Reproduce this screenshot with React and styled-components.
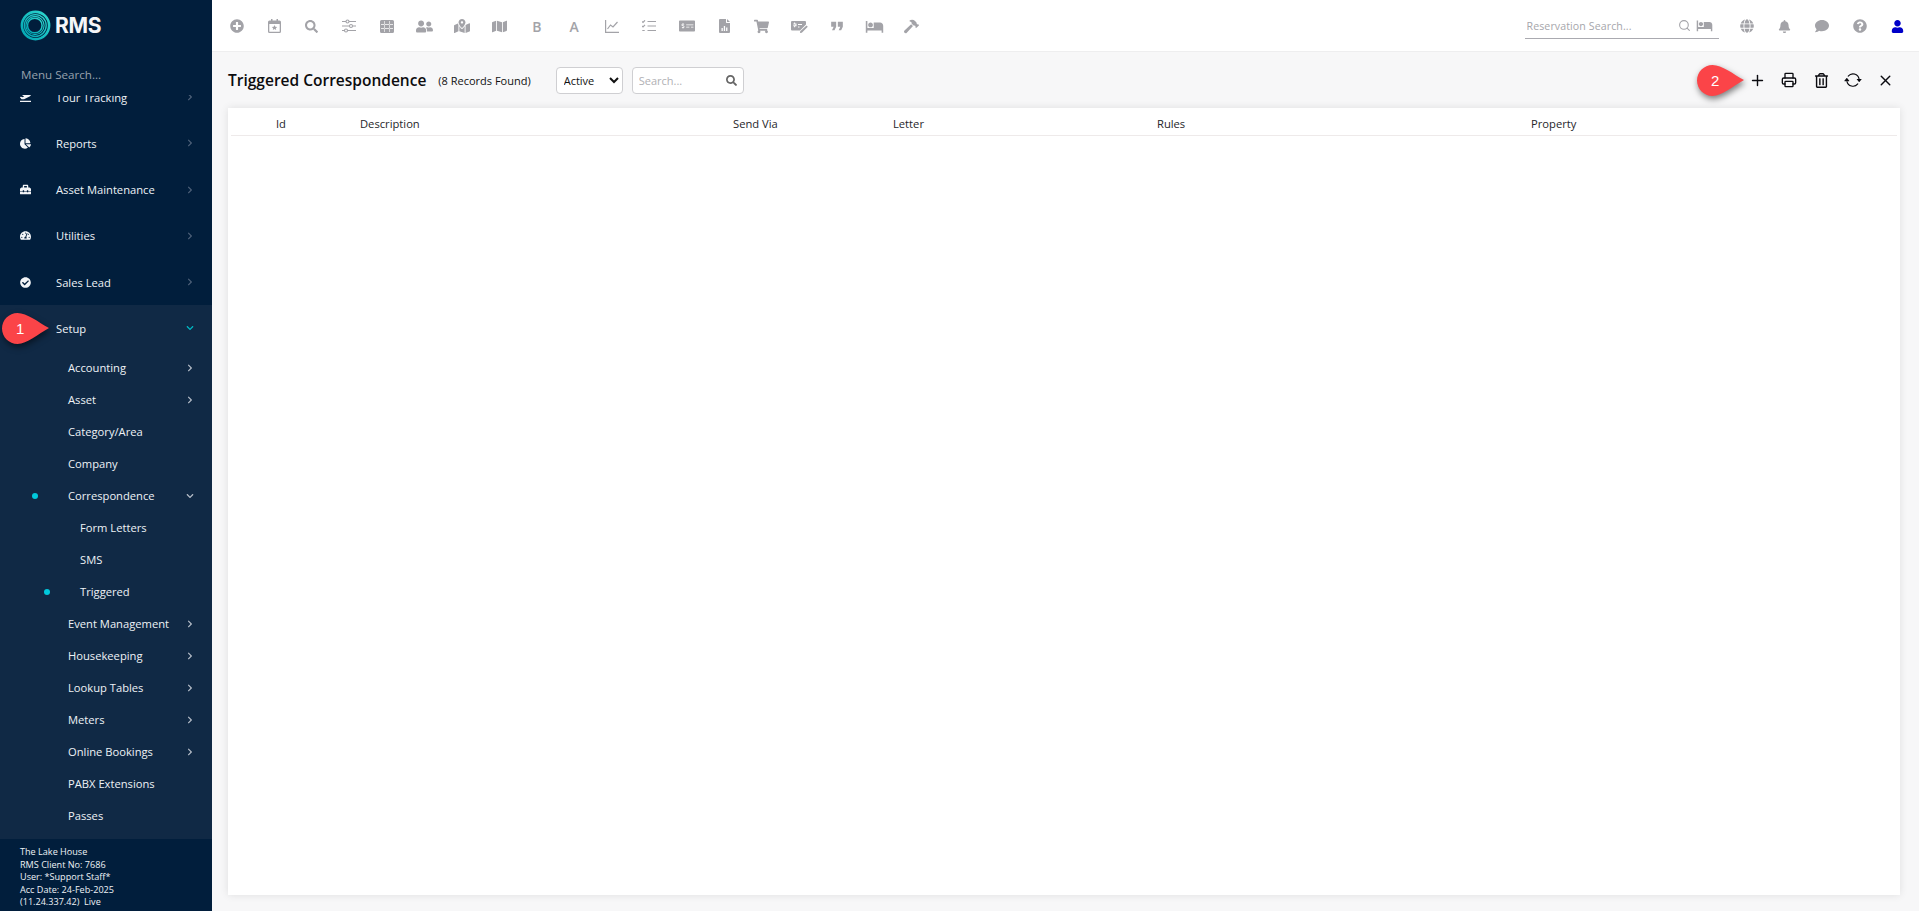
import React from 'react';
import styled, { createGlobalStyle } from 'styled-components';
import {
  FaPlusCircle, FaSearch, FaUserFriends, FaMapMarkedAlt, FaMap, FaMoneyCheckAlt, FaShoppingCart,
  FaHammer, FaGlobe, FaBell, FaComment, FaQuestionCircle, FaUser, FaChartPie, FaToolbox,
  FaTachometerAlt, FaCheckCircle, FaPlaneDeparture, FaChevronRight, FaChevronDown, FaRegTrashAlt,
} from 'react-icons/fa';
import { BsArrowRepeat } from 'react-icons/bs';
import { MdHotel, MdFormatQuote } from 'react-icons/md';
import { Plus, Printer, X, Search } from 'lucide-react';

const GlobalStyle = createGlobalStyle`
  html, body { margin: 0; height: 100%; }
  body { font-family: "Open Sans", "Liberation Sans", sans-serif; font-size: 11.2px; color: #111; }
  #root { height: 100%; }
  * { box-sizing: border-box; }
`;

const Page = styled.div`
  display: flex;
  height: 911px;
  overflow: hidden;
  background: #f7f7f8;
`;

const Sidebar = styled.aside`
  width: 212px;
  flex: none;
  display: flex;
  flex-direction: column;
  background: #011e3c;
`;

const Brand = styled.div`
  height: 58px;
  flex: none;
  display: flex;
  align-items: flex-start;
  gap: 4px;
  padding: 10px 0 0 20px;
`;

const BrandName = styled.span`
  font-family: Inter, "Liberation Sans", sans-serif;
  font-size: 21px;
  font-weight: 700;
  line-height: 32px;
  letter-spacing: -0.3px;
  color: #f4f6f8;
`;

const MenuSearch = styled.input`
  height: 32px;
  flex: none;
  margin-bottom: 5px;
  padding: 0 0 0 21px;
  border: 0;
  outline: 0;
  background: transparent;
  font: 11.6px "Open Sans", sans-serif;
  &::placeholder { color: #97a1ad; opacity: 1; }
`;

const Nav = styled.nav`
  flex: 1;
  min-height: 0;
  overflow: hidden;
`;

const NavScroll = styled.div`
  margin-top: -21px;
`;

const NavRow = styled.div`
  position: relative;
  height: 46.25px;
  display: flex;
  align-items: center;
  padding: 0 16px 0 20px;
  color: #eef2f6;
`;

const NavIcon = styled.span`
  width: 36px;
  flex: none;
  display: flex;
  font-size: 11px;
  color: #f2f4f7;
`;

const NavLabel = styled.span`
  flex: 1;
  white-space: nowrap;
`;

const NavChevron = styled.span`
  display: flex;
  width: 10px;
  font-size: 8px;
  color: ${(p) => p.$color || '#4d6078'};
`;

const SetupSection = styled.div`
  background: #102945;
  padding-bottom: 20px;
`;

const SubRow = styled.div`
  position: relative;
  height: 32px;
  display: flex;
  align-items: center;
  padding: 0 16px 0 ${(p) => (p.$depth === 2 ? 80 : 68)}px;
  color: #eef2f6;
`;

const ActiveDot = styled.i`
  position: absolute;
  top: 13px;
  left: ${(p) => (p.$depth === 2 ? 44 : 32)}px;
  width: 6px;
  height: 6px;
  border-radius: 50%;
  background: #00c9dc;
`;

const SideFooter = styled.footer`
  height: 72px;
  flex: none;
  position: relative;
  padding: 7px 0 0 20px;
  background: #011e3c;
  color: #eef2f6;
  font-size: 9.1px;
  line-height: 12.5px;
  white-space: pre;
`;

const Main = styled.main`
  flex: 1;
  min-width: 0;
  display: flex;
  flex-direction: column;
`;

const TopBar = styled.header`
  height: 52px;
  flex: none;
  display: flex;
  align-items: center;
  padding: 1px 3px 0 6px;
  background: #fff;
  border-bottom: 1px solid #eeeeef;
`;

const TopIcon = styled.span`
  width: 37.5px;
  flex: none;
  display: flex;
  align-items: center;
  justify-content: center;
  color: ${(p) => p.$color || '#a3a3a8'};
`;

const TopLetter = styled(TopIcon)`
  font-size: 14px;
  font-weight: 600;
`;

const ReservationSearch = styled.div`
  width: 194px;
  height: 25px;
  margin: 0 10px 0 auto;
  display: flex;
  align-items: center;
  gap: 5px;
  padding: 0 6px 0 2px;
  border-bottom: 1px solid #aaaab0;
  color: #a3a3a8;
`;

const ReservationInput = styled.input`
  flex: 1;
  min-width: 0;
  border: 0;
  outline: 0;
  padding: 0;
  background: transparent;
  font: 10.6px "Open Sans", sans-serif;
  letter-spacing: 0.1px;
  &::placeholder { color: #a6a6ab; opacity: 1; }
`;

const Content = styled.section`
  flex: 1;
  min-height: 0;
  display: flex;
  flex-direction: column;
  padding: 0 19px 16px 16px;
`;

const ContentHead = styled.div`
  height: 56px;
  flex: none;
  display: flex;
  align-items: center;
`;

const Title = styled.h1`
  margin: 0;
  font-size: 15.5px;
  font-weight: 600;
  color: #0c0c0e;
`;

const Records = styled.span`
  margin: 0 0 0 12px;
  font-size: 11px;
  color: #111;
`;

const StatusSelect = styled.select`
  width: 67px;
  height: 27px;
  margin: 1px 0 0 25px;
  padding: 0 0 0 3px;
  border: 1px solid #cfcfd2;
  border-radius: 4px;
  background: #fff;
  font: 11px "Open Sans", sans-serif;
  color: #111;
`;

const SearchBox = styled.div`
  width: 112px;
  height: 27px;
  margin: 1px 0 0 9px;
  display: flex;
  align-items: center;
  padding: 0 6px;
  border: 1px solid #cfcfd2;
  border-radius: 4px;
  background: #fff;
  color: #666;
`;

const SearchInput = styled.input`
  flex: 1;
  min-width: 0;
  border: 0;
  outline: 0;
  padding: 0;
  background: transparent;
  font: 11px "Open Sans", sans-serif;
  &::placeholder { color: #b0b0b4; opacity: 1; }
`;

const Actions = styled.div`
  position: relative;
  margin: 0 -1px 0 auto;
  display: flex;
`;

const ActionButton = styled.span`
  width: 32px;
  height: 24px;
  display: flex;
  align-items: center;
  justify-content: center;
  color: #0b0b10;
`;

const Card = styled.div`
  flex: 1;
  min-height: 0;
  padding: 0 3px;
  background: #fff;
  box-shadow: 0 0 8px rgba(0, 0, 0, 0.1);
`;

const HeaderRow = styled.div`
  height: 28px;
  display: grid;
  grid-template-columns: 84px 373px 160px 264px 374px 1fr;
  align-items: center;
  padding: 4px 0 0 45px;
  border-bottom: 1px solid #eeeaea;
  font-weight: 500;
  color: #26262a;
`;

const BadgeWrap = styled.div`
  position: absolute;
  top: ${(p) => p.$top}px;
  left: ${(p) => p.$left}px;
  width: 47px;
  height: 31px;
  display: flex;
  align-items: center;
  padding-left: 14px;
  font-family: "Liberation Sans", sans-serif;
  font-size: 15px;
  color: #fff;
  z-index: 2;
`;

const BadgeShape = styled.svg`
  position: absolute;
  top: 0;
  left: 0;
  z-index: -1;
  overflow: visible;
  filter: drop-shadow(1px 3px 3px rgba(0, 0, 0, 0.5));
`;

const Badge = ({ n, top, left }) => (
  <BadgeWrap $top={top} $left={left}>
    <BadgeShape width="47" height="31" viewBox="0 0 47 31">
      <path d="M15.500 0C25 0 36 9 47 15c-11 6-22 16-31.500 16C7 31 0 24 0 15.500S7 0 15.500 0z" fill="#fb4448" />
    </BadgeShape>
    {n}
  </BadgeWrap>
);

const RmsLogo = () => (
  <svg width="31" height="31" viewBox="0 0 31 31" fill="none">
    <defs>
      <linearGradient id="ring" x1="0" y1="1" x2="1" y2="0">
        <stop offset="0" stopColor="#00a4b2" />
        <stop offset="1" stopColor="#2fd8cf" />
      </linearGradient>
    </defs>
    <circle cx="15.500" cy="15.500" r="13.600" stroke="url(#ring)" strokeWidth="2.600" />
    <circle cx="15.300" cy="15.500" r="10.900" stroke="url(#ring)" strokeWidth="1.300" />
    <circle cx="15" cy="15.500" r="9.100" stroke="url(#ring)" strokeWidth="1.100" />
    <circle cx="14.800" cy="15.500" r="7.300" stroke="url(#ring)" strokeWidth="1.500" />
  </svg>
);

const CalendarStar = () => (
  <svg width="13" height="14" viewBox="0 0 13 14" fill="currentColor">
    <path fillRule="evenodd" d="M3 0h1.500v1.500h4V0H10v1.500h1.500A1.500 1.500 0 0 1 13 3v9.500a1.500 1.500 0 0 1-1.500 1.500h-10A1.500 1.500 0 0 1 0 12.500V3a1.500 1.500 0 0 1 1.500-1.500H3zM1.300 5v7.500c0 .1.100.2.200.2h10c.1 0 .2-.1.200-.2V5z" />
    <path d="M6.500 6l.8 1.700 1.900.2-1.400 1.300.4 1.900-1.700-1-1.700 1 .4-1.900-1.400-1.300 1.900-.2z" />
  </svg>
);

const TuneLines = () => (
  <svg width="14" height="14" viewBox="0 0 14 14" fill="none" stroke="currentColor" strokeWidth="1.100">
    <path d="M0 2.500h4M7 2.500h7M0 7h7.500M10.500 7H14M0 11.500h2.500M5.500 11.500H14" />
    <circle cx="5.500" cy="2.500" r="1.500" />
    <circle cx="9" cy="7" r="1.500" />
    <circle cx="4" cy="11.500" r="1.500" />
  </svg>
);

const GridCells = () => (
  <svg width="14" height="13" viewBox="0 0 14 13" fill="currentColor">
    <path fillRule="evenodd" d="M1.500 0h11A1.500 1.500 0 0 1 14 1.500v10a1.500 1.500 0 0 1-1.500 1.500h-11A1.500 1.500 0 0 1 0 11.500v-10A1.500 1.500 0 0 1 1.500 0zM4.300 1v11h.6V1zM9.100 1v11h.6V1zM1 4.100v.6h12v-.6zM1 8.300v.6h12v-.6z" />
  </svg>
);

const LineChart = () => (
  <svg width="14" height="13" viewBox="0 0 14 13" fill="none" stroke="currentColor" strokeWidth="1.200">
    <path d="M.6 0v12.400H14" />
    <path d="M2.500 9l3-4 2.500 2 4.500-5" />
  </svg>
);

const CheckList = () => (
  <svg width="14" height="12" viewBox="0 0 14 12" fill="none" stroke="currentColor" strokeWidth="1.200">
    <path d="M5.500 1.500H14M5.500 6H14M5.500 10.500H14" />
    <path d="M0 1.500l1 1 2-2.200M0 6l1 1 2-2.200M.3 10.500h2.400" />
  </svg>
);

const FileChart = () => (
  <svg width="11" height="14" viewBox="0 0 11 14" fill="currentColor">
    <path fillRule="evenodd" d="M1 0h6v3.500c0 .3.200.5.500.5H11v9a1 1 0 0 1-1 1H1a1 1 0 0 1-1-1V1a1 1 0 0 1 1-1zM2.500 9v3h1.300V9zM4.800 7v5h1.300V7zM7.100 8.500V12h1.300V8.500z" />
    <path d="M8 0l3 3H8z" />
  </svg>
);

const ChequeEdit = () => (
  <svg width="17" height="13" viewBox="0 0 17 13" fill="currentColor">
    <path fillRule="evenodd" d="M1 1h13a1 1 0 0 1 1 1v2.500L9 10.500H1a1 1 0 0 1-1-1V2a1 1 0 0 1 1-1zM2.300 3.500v1h2.200v.8H2.300v1h.8v.9h1v-.9h1.400V3.500h-1.400v-.9h-1v.9zM7 4v1h4V4zM7 6.500v1h1.500v-1z" />
    <path d="M15.500 5.500l1.300 1.300-6 6-1.800.2.200-1.800z" />
  </svg>
);

const topIcons = [
  <FaPlusCircle size={14} />, <CalendarStar />, <FaSearch size={13} />, <TuneLines />, <GridCells />,
  <FaUserFriends size={17} />, <FaMapMarkedAlt size={16} />, <FaMap size={15} />, 'B', 'A',
  <LineChart />, <CheckList />, <FaMoneyCheckAlt size={16} />, <FileChart />, <FaShoppingCart size={15} />,
  <ChequeEdit />, <MdFormatQuote size={20} />, <MdHotel size={19} />, <FaHammer size={15} />,
];

const rightIcons = [
  { icon: <FaGlobe size={14} /> },
  { icon: <FaBell size={13} /> },
  { icon: <FaComment size={14} /> },
  { icon: <FaQuestionCircle size={14} /> },
  { icon: <FaUser size={13} />, color: '#0000c8' },
];

const mainItems = [
  { label: 'Tour Tracking', icon: <FaPlaneDeparture /> },
  { label: 'Reports', icon: <FaChartPie /> },
  { label: 'Asset Maintenance', icon: <FaToolbox /> },
  { label: 'Utilities', icon: <FaTachometerAlt /> },
  { label: 'Sales Lead', icon: <FaCheckCircle /> },
];

const setupItems = [
  { label: 'Accounting', more: true },
  { label: 'Asset', more: true },
  { label: 'Category/Area' },
  { label: 'Company' },
  { label: 'Correspondence', open: true, active: true },
  { label: 'Form Letters', depth: 2 },
  { label: 'SMS', depth: 2 },
  { label: 'Triggered', depth: 2, active: true },
  { label: 'Event Management', more: true },
  { label: 'Housekeeping', more: true },
  { label: 'Lookup Tables', more: true },
  { label: 'Meters', more: true },
  { label: 'Online Bookings', more: true },
  { label: 'PABX Extensions' },
  { label: 'Passes' },
];

const columns = ['Id', 'Description', 'Send Via', 'Letter', 'Rules', 'Property'];

export default function App() {
  return (
    <Page>
      <GlobalStyle />
      <Sidebar>
        <Brand>
          <RmsLogo />
          <BrandName>RMS</BrandName>
        </Brand>
        <MenuSearch placeholder="Menu Search..." />
        <Nav>
          <NavScroll>
            {mainItems.map((item) => (
              <NavRow key={item.label}>
                <NavIcon>{item.icon}</NavIcon>
                <NavLabel>{item.label}</NavLabel>
                <NavChevron><FaChevronRight /></NavChevron>
              </NavRow>
            ))}
            <SetupSection>
              <NavRow>
                <Badge n="1" top={8} left={2} />
                <NavIcon />
                <NavLabel>Setup</NavLabel>
                <NavChevron $color="#00b7c3"><FaChevronDown /></NavChevron>
              </NavRow>
              {setupItems.map((item) => (
                <SubRow key={item.label} $depth={item.depth}>
                  {item.active && <ActiveDot $depth={item.depth} />}
                  <NavLabel>{item.label}</NavLabel>
                  {item.more && <NavChevron $color="#b4bcc7"><FaChevronRight /></NavChevron>}
                  {item.open && <NavChevron $color="#b4bcc7"><FaChevronDown /></NavChevron>}
                </SubRow>
              ))}
            </SetupSection>
          </NavScroll>
        </Nav>
        <SideFooter>
          {'The Lake House\nRMS Client No: 7686\nUser: *Support Staff*\nAcc Date: 24-Feb-2025\n(11.24.337.42)  Live'}
        </SideFooter>
      </Sidebar>
      <Main>
        <TopBar>
          {topIcons.map((icon, i) => (typeof icon === 'string'
            ? <TopLetter key={i}>{icon}</TopLetter>
            : <TopIcon key={i}>{icon}</TopIcon>))}
          <ReservationSearch>
            <ReservationInput placeholder="Reservation Search..." />
            <Search size={13} />
            <MdHotel size={17} />
          </ReservationSearch>
          {rightIcons.map((item, i) => <TopIcon key={i} $color={item.color}>{item.icon}</TopIcon>)}
        </TopBar>
        <Content>
          <ContentHead>
            <Title>Triggered Correspondence</Title>
            <Records>(8 Records Found)</Records>
            <StatusSelect defaultValue="Active">
              <option>Active</option>
            </StatusSelect>
            <SearchBox>
              <SearchInput placeholder="Search..." />
              <FaSearch size={11} />
            </SearchBox>
            <Actions>
              <Badge n="2" top={-3} left={-44} />
              <ActionButton><Plus size={17} /></ActionButton>
              <ActionButton><Printer size={16} /></ActionButton>
              <ActionButton><FaRegTrashAlt size={15} /></ActionButton>
              <ActionButton><BsArrowRepeat size={18} /></ActionButton>
              <ActionButton><X size={17} /></ActionButton>
            </Actions>
          </ContentHead>
          <Card>
            <HeaderRow>
              {columns.map((c) => <span key={c}>{c}</span>)}
            </HeaderRow>
          </Card>
        </Content>
      </Main>
    </Page>
  );
}
